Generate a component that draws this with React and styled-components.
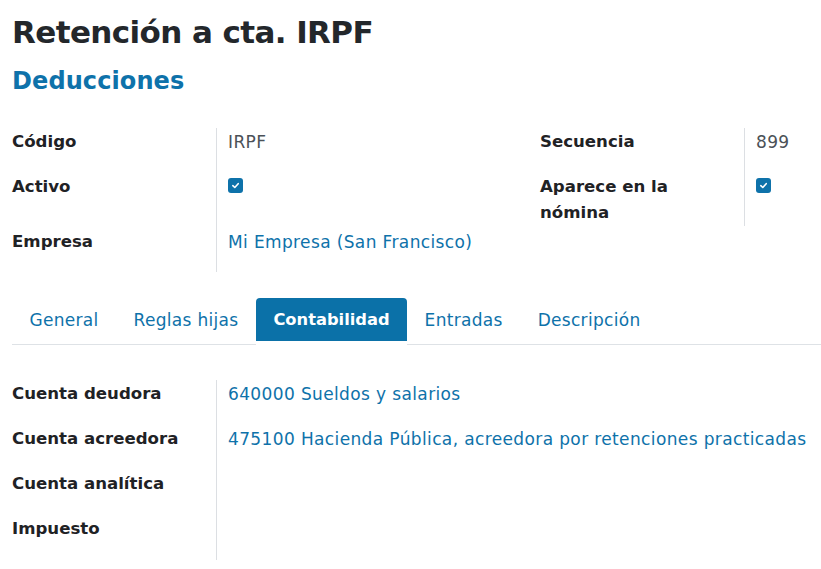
import styled, { createGlobalStyle } from 'styled-components';

const GlobalStyle = createGlobalStyle`
  body {
    margin: 0;
    background: #fff;
    font-family: "DejaVu Sans", "Noto Sans", sans-serif;
    color: #212529;
  }
`;

const Page = styled.div`
  width: 821px;
  padding: 12px 0 0 12px;
  box-sizing: border-box;
`;

const Title = styled.h1`
  margin: 0;
  font-size: 31px;
  line-height: 40px;
  font-weight: 700;
  letter-spacing: -0.6px;
  color: #23272b;
`;

const Subtitle = styled.h2`
  margin: 14px 0 0;
  font-size: 24px;
  line-height: 30px;
  font-weight: 700;
  letter-spacing: 0.1px;
  color: #0e72aa;
`;

const Groups = styled.div`
  display: grid;
  grid-template-columns: 528px 1fr;
  margin-top: 32px;
`;

const Group = styled.div`
  display: grid;
  grid-template-columns: 204px 1fr;
  align-content: start;
`;

const Label = styled.div`
  font-size: 16.6px;
  line-height: 26px;
  font-weight: 700;
  color: #1f2225;
  padding: 1px 12px ${p => (p.$last ? 0 : 18)}px 0;
`;

const Value = styled.div`
  border-left: 1px solid #dcdfe3;
  padding: 1px 0 ${p => (p.$last ? 0 : 18)}px 11px;
  min-height: ${p => p.$minH || 26}px;
  font-size: 17px;
  line-height: 26px;
  letter-spacing: 0.37px;
  white-space: nowrap;
  color: ${p => (p.$link ? '#0e72aa' : '#4b5157')};
`;

const Check = styled.span`
  display: inline-flex;
  align-items: center;
  justify-content: center;
  width: 15px;
  height: 15px;
  margin-top: 4px;
  vertical-align: top;
  border-radius: 3px;
  background: #0e72aa;
`;

const TabBar = styled.div`
  display: flex;
  align-items: flex-end;
  margin-top: 26px;
  border-bottom: 1px solid #dee2e6;
`;

const Tab = styled.div`
  height: 43px;
  padding: 0 17.5px;
  display: flex;
  align-items: center;
  font-size: ${p => (p.$active ? 16.3 : 17)}px;
  letter-spacing: ${p => (p.$active ? 0 : 0.3)}px;
  font-weight: ${p => (p.$active ? 700 : 400)};
  color: ${p => (p.$active ? '#fff' : '#0e72aa')};
  background: ${p => (p.$active ? '#0b71a8' : 'transparent')};
  background-clip: padding-box;
  border-radius: 4px 4px 0 0;
  border-bottom: 4px solid ${p => (p.$active ? '#fff' : 'transparent')};
  margin-bottom: -1px;
`;

const Lower = styled.div`
  display: grid;
  grid-template-columns: 204px 1fr;
  margin-top: 35px;
`;

const LowLabel = styled(Label)`
  padding-bottom: 18px;
`;

const LowValue = styled(Value)`
  padding-bottom: 18px;
`;

function CheckIcon() {
  return (
    <Check>
      <svg width="9" height="9" viewBox="0 0 10 10">
        <path d="M2 5.2 L4.2 7.2 L8 3" fill="none" stroke="#fff" strokeWidth="1.8" strokeLinecap="round" strokeLinejoin="round" />
      </svg>
    </Check>
  );
}

const tabs = ['General', 'Reglas hijas', 'Contabilidad', 'Entradas', 'Descripción'];

const accounts = [
  ['Cuenta deudora', '640000 Sueldos y salarios'],
  ['Cuenta acreedora', '475100 Hacienda Pública, acreedora por retenciones practicadas'],
  ['Cuenta analítica', ''],
  ['Impuesto', ''],
];

export default function App() {
  return (
    <Page>
      <GlobalStyle />
      <Title>Retención a cta. IRPF</Title>
      <Subtitle>Deducciones</Subtitle>

      <Groups>
        <Group>
          <Label>Código</Label>
          <Value>IRPF</Value>
          <Label>Activo</Label>
          <Value $minH={36}><CheckIcon /></Value>
          <Label $last>Empresa</Label>
          <Value $last $link $minH={43}>Mi Empresa (San Francisco)</Value>
        </Group>
        <Group>
          <Label>Secuencia</Label>
          <Value>899</Value>
          <Label $last>Aparece en la nómina</Label>
          <Value $last><CheckIcon /></Value>
        </Group>
      </Groups>

      <TabBar>
        {tabs.map(t => (
          <Tab key={t} $active={t === 'Contabilidad'}>{t}</Tab>
        ))}
      </TabBar>

      <Lower>
        {accounts.map(([label, value]) => (
          <>
            <LowLabel key={label + 'l'}>{label}</LowLabel>
            <LowValue key={label + 'v'} $link>{value}</LowValue>
          </>
        ))}
      </Lower>
    </Page>
  );
}
